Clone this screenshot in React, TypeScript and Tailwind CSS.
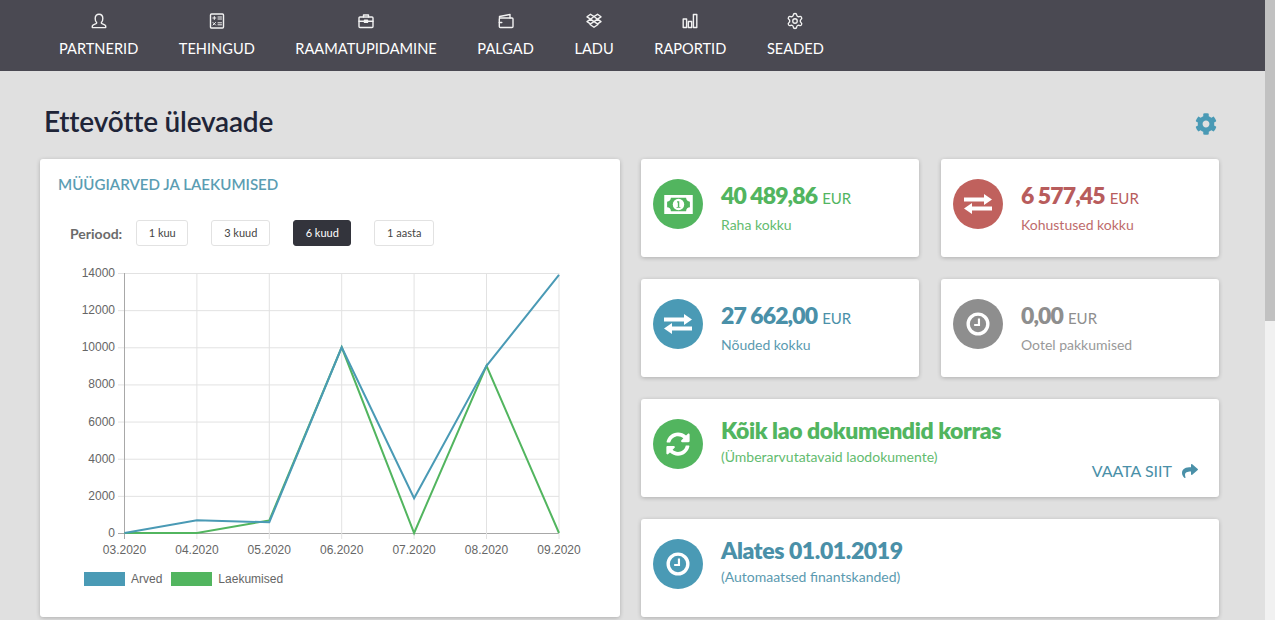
import type { ReactNode } from "react";
import { FaCog, FaShare, FaSyncAlt } from "react-icons/fa";
import { Settings } from "lucide-react";

const lato = "font-['Lato','Noto_Sans',sans-serif]";

function NavIcon({ children }: { children: ReactNode }) {
  return (
    <svg width="16" height="16" viewBox="0 0 16 16" fill="none" stroke="currentColor" strokeWidth="1.4" strokeLinejoin="round" strokeLinecap="round">
      {children}
    </svg>
  );
}

const navItems: { label: string; icon: ReactNode }[] = [
  {
    label: "PARTNERID",
    icon: (
      <NavIcon>
        <path d="M5.600 10.200V9.400C4.600 8.600 4.200 7.400 4.200 5.400 4.200 2.800 5.800 1.200 8 1.200s3.800 1.600 3.800 4.200c0 2-.4 3.200-1.400 4v.8c0 .7 3.800 1.500 4.300 2.800v1.600H1.300V13c.5-1.300 4.300-2.100 4.300-2.800z" />
      </NavIcon>
    ),
  },
  {
    label: "TEHINGUD",
    icon: (
      <NavIcon>
        <rect x="1.500" y="1" width="13" height="14" rx="1" />
        <path d="M3.800 5h3M5.300 3.500v3M9 4h3.500M9 6h3.500M4 9.500l2.500 2.500M6.500 9.500L4 12M9 9.800h3.500M9 11.800h3.500" strokeWidth="1" />
      </NavIcon>
    ),
  },
  {
    label: "RAAMATUPIDAMINE",
    icon: (
      <NavIcon>
        <rect x="1" y="4" width="14" height="10.500" rx="1" />
        <path d="M5.500 4V2h5v2M1 8.300h5M10 8.300h5" />
        <rect x="6.500" y="7.200" width="3" height="2.200" fill="currentColor" />
      </NavIcon>
    ),
  },
  {
    label: "PALGAD",
    icon: (
      <NavIcon>
        <path d="M1.500 5V3.500L12 1.500V5" />
        <rect x="1.300" y="5" width="13.700" height="9.500" rx="1" />
        <path d="M1.300 9.500h2.500" />
      </NavIcon>
    ),
  },
  {
    label: "LADU",
    icon: (
      <NavIcon>
        <path d="M4.500 1.300L8 3.500l3.500-2.200L15 3.800l-3.500 2.400L15 8.600l-3.500 2.200L8 8.600l-3.500 2.200L1 8.600l3.500-2.400L1 3.800zM4.500 6.200L8 3.500l3.500 2.700L8 8.600zM4 11.500l4 2.800 4-2.800" />
      </NavIcon>
    ),
  },
  {
    label: "RAPORTID",
    icon: (
      <NavIcon>
        <rect x="1.200" y="6" width="3.400" height="8.500" />
        <rect x="6.300" y="8.500" width="3.400" height="6" />
        <rect x="11.400" y="1.500" width="3.400" height="13" />
      </NavIcon>
    ),
  },
  { label: "SEADED", icon: <Settings size={18} strokeWidth={1.8} /> },
];

function ClockIcon() {
  return (
    <svg width="24" height="24" viewBox="0 0 20 20" fill="none" stroke="white">
      <circle cx="10" cy="10" r="8.200" strokeWidth="2.800" />
      <path d="M10.800 5.500v5.300H6.800" strokeWidth="1.800" />
    </svg>
  );
}

function ExchangeIcon() {
  return (
    <svg width="28" height="20" viewBox="0 0 28 20" fill="white">
      <path d="M0 3.500h20V0l8 5.500-8 5.500V7.500H0z" />
      <path d="M28 12.500H8V9l-8 5.500L8 20v-3.500h20z" />
    </svg>
  );
}

function MoneyIcon() {
  return (
    <svg width="29" height="19" viewBox="0 0 30 20">
      <path
        fill="white"
        fillRule="evenodd"
        d="M0 0h30v20H0zM7 3c0 2.200-1.800 4-4 4v6c2.200 0 4 1.800 4 4h16c0-2.200 1.800-4 4-4V7c-2.200 0-4-1.800-4-4z"
      />
      <circle cx="15" cy="10" r="6" fill="white" />
      <path d="M13.500 6.500h2.300v6h1.200v1h-4v-1h1.300V8h-.8z" fill="#52b55f" />
    </svg>
  );
}

function Circle({ color, children }: { color: string; children: ReactNode }) {
  return (
    <div className={`flex h-[50px] w-[50px] shrink-0 items-center justify-center rounded-full ${color}`}>
      {children}
    </div>
  );
}

function StatCard({
  icon,
  circle,
  text,
  value,
  label,
}: {
  icon: ReactNode;
  circle: string;
  text: string;
  value: string;
  label: string;
}) {
  return (
    <div className="flex h-[98px] w-[278px] items-start gap-[18px] rounded-[3px] bg-white px-3 pt-5 shadow-[0_1px_4px_rgba(0,0,0,0.22)]">
      <Circle color={circle}>{icon}</Circle>
      <div className={text}>
        <div className="mt-[-2px] flex items-baseline gap-[5px] leading-[36px]">
          <span className="text-[23px] font-extrabold tracking-[-0.9px]">{value}</span>
          <span className="text-[15px]">EUR</span>
        </div>
        <div className="mt-[-1px] text-[14px] leading-[20px] opacity-90">{label}</div>
      </div>
    </div>
  );
}

const xs = [124.5, 196.9, 269.3, 341.7, 414.1, 486.5, 559];
const months = ["03.2020", "04.2020", "05.2020", "06.2020", "07.2020", "08.2020", "09.2020"];
const yTicks = [0, 2000, 4000, 6000, 8000, 10000, 12000, 14000];
const arved = [0, 680, 580, 10000, 1870, 9000, 13900];
const laekumised = [0, 0, 680, 10000, 0, 9000, 0];

const yOf = (v: number) => 533 - (v / 14000) * 260;
const line = (data: number[]) => data.map((v, i) => `${xs[i]},${yOf(v)}`).join(" ");

// chart coordinates are taken as page coordinates minus the svg's offset (60, 262)
function Chart() {
  return (
    <svg width="540" height="300" viewBox="60 262 540 300" className="block">
      {yTicks.map((t) => (
        <g key={t}>
          <line x1={118} x2={559} y1={yOf(t) + 0.5} y2={yOf(t) + 0.5} stroke={t === 0 ? "#a8a8a8" : "#e2e2e2"} />
          <text x={115} y={yOf(t) + 4} textAnchor="end" fontSize="12" fontFamily="Liberation Sans" fill="#666">
            {t}
          </text>
        </g>
      ))}
      {xs.map((x, i) => (
        <g key={x}>
          <line x1={x} x2={x} y1={273} y2={539} stroke={i === 0 ? "#a8a8a8" : "#e2e2e2"} />
          <text x={x} y={554} textAnchor="middle" fontSize="12" fontFamily="Liberation Sans" fill="#666">
            {months[i]}
          </text>
        </g>
      ))}
      <polyline points={line(laekumised)} fill="none" stroke="#52b55f" strokeWidth="2" />
      <polyline points={line(arved)} fill="none" stroke="#4a9ab5" strokeWidth="2" />
    </svg>
  );
}

const periods = [
  { label: "1 kuu", width: "w-[52px]", gap: "mr-[23px]" },
  { label: "3 kuud", width: "w-[59px]", gap: "mr-[23px]" },
  { label: "6 kuud", width: "w-[58px]", gap: "mr-[23px]", active: true },
  { label: "1 aasta", width: "w-[60px]", gap: "" },
];

export default function App() {
  return (
    <div className={`flex h-[620px] w-[1275px] overflow-hidden bg-[#e0e0e0] ${lato}`}>
      <div className="w-[1265px] shrink-0">
        <nav className="flex h-[71px] gap-[40.600px] bg-[#4a4952] pl-[59px] pt-[13px] text-white">
          {navItems.map((item) => (
            <div key={item.label} className="flex flex-col items-center">
              <div className="flex h-[16px] items-center text-[#f2f2f2]">{item.icon}</div>
              <div className="mt-[3.500px] text-[14.600px] leading-[32px]">{item.label}</div>
            </div>
          ))}
        </nav>

        <div className="pl-[40px] pr-[46px]">
          <div className="flex h-[88px] items-center justify-between pl-[4px] pr-[2px] pt-[18px]">
            <h1 className="mt-[-7px] text-[28px] font-semibold tracking-[-0.2px] text-[#1f2538]">Ettevõtte ülevaade</h1>
            <FaCog size={22} className="text-[#4a9ab5]" />
          </div>

          <div className="flex gap-[21px]">
            <section className="h-[458px] w-[580px] rounded-[3px] bg-white pt-[15px] shadow-[0_1px_4px_rgba(0,0,0,0.22)]">
              <h2 className="pl-[18px] text-[15.100px] font-semibold leading-[20px] text-[#5b9db3]">
                MÜÜGIARVED JA LAEKUMISED
              </h2>
              <div className="mt-[26px] flex h-[26px] items-center pl-[30px]">
                <span className="mr-[14px] text-[14px] font-bold text-[#6b6b6b]">Periood:</span>
                {periods.map((p) => (
                  <button
                    key={p.label}
                    className={`flex h-[26px] items-center justify-center rounded-[3px] border text-[11px] ${p.width} ${p.gap} ${
                      p.active
                        ? "border-[#33343c] bg-[#33343c] text-white"
                        : "border-[#e2e2e2] bg-white text-[#444]"
                    }`}
                  >
                    {p.label}
                  </button>
                ))}
              </div>
              <div className="ml-[20px] mt-[16px] h-[300px]">
                <Chart />
              </div>
              <div className="mt-[8px] flex items-center pl-[44px] font-['Liberation_Sans',sans-serif] text-[12px] text-[#666]">
                <span className="mr-[6px] h-[14px] w-[41px] bg-[#4a9ab5]" />
                <span className="mr-[9px]">Arved</span>
                <span className="mr-[6px] h-[14px] w-[41px] bg-[#52b55f]" />
                <span>Laekumised</span>
              </div>
            </section>

            <div className="flex w-[578px] flex-col gap-[22px]">
              <div className="flex gap-[22px]">
                <StatCard
                  icon={<MoneyIcon />}
                  circle="bg-[#52b55f]"
                  text="text-[#52b55f]"
                  value="40 489,86"
                  label="Raha kokku"
                />
                <StatCard
                  icon={<ExchangeIcon />}
                  circle="bg-[#c0615d]"
                  text="text-[#b85c5c]"
                  value="6 577,45"
                  label="Kohustused kokku"
                />
              </div>
              <div className="flex gap-[22px]">
                <StatCard
                  icon={<ExchangeIcon />}
                  circle="bg-[#4a9ab5]"
                  text="text-[#4a90a8]"
                  value="27 662,00"
                  label="Nõuded kokku"
                />
                <StatCard
                  icon={<ClockIcon />}
                  circle="bg-[#8e8e8e]"
                  text="text-[#8e8e8e]"
                  value="0,00"
                  label="Ootel pakkumised"
                />
              </div>

              <div className="flex h-[98px] gap-[18px] rounded-[3px] bg-white px-3 pt-5 shadow-[0_1px_4px_rgba(0,0,0,0.22)]">
                <Circle color="bg-[#52b55f]">
                  <FaSyncAlt size={24} className="text-white" />
                </Circle>
                <div className="flex-1 text-[#52b55f]">
                  <div className="mt-[-7px] text-[23px] font-extrabold leading-[36px] tracking-[-0.4px]">Kõik lao dokumendid korras</div>
                  <div className="mt-[-1px] text-[14px] leading-[20px] opacity-90">(Ümberarvutatavaid laodokumente)</div>
                  <div className="mr-[9px] mt-[-6px] flex items-center justify-end gap-[10px] text-[16px] leading-[20px] text-[#4a90a8]">
                    VAATA SIIT
                    <FaShare size={16} />
                  </div>
                </div>
              </div>

              <div className="flex h-[98px] gap-[18px] rounded-[3px] bg-white px-3 pt-5 shadow-[0_1px_4px_rgba(0,0,0,0.22)]">
                <Circle color="bg-[#4a9ab5]">
                  <ClockIcon />
                </Circle>
                <div className="text-[#4a90a8]">
                  <div className="mt-[-7px] text-[23px] font-extrabold leading-[36px] tracking-[-0.4px]">Alates 01.01.2019</div>
                  <div className="mt-[-1px] text-[14px] leading-[20px] opacity-90">(Automaatsed finantskanded)</div>
                </div>
              </div>
            </div>
          </div>
        </div>
      </div>

      <div className="h-full w-[10px] shrink-0 bg-[#f1f1f1]">
        <div className="h-[321px] w-full bg-[#c1c1c1]" />
      </div>
    </div>
  );
}
